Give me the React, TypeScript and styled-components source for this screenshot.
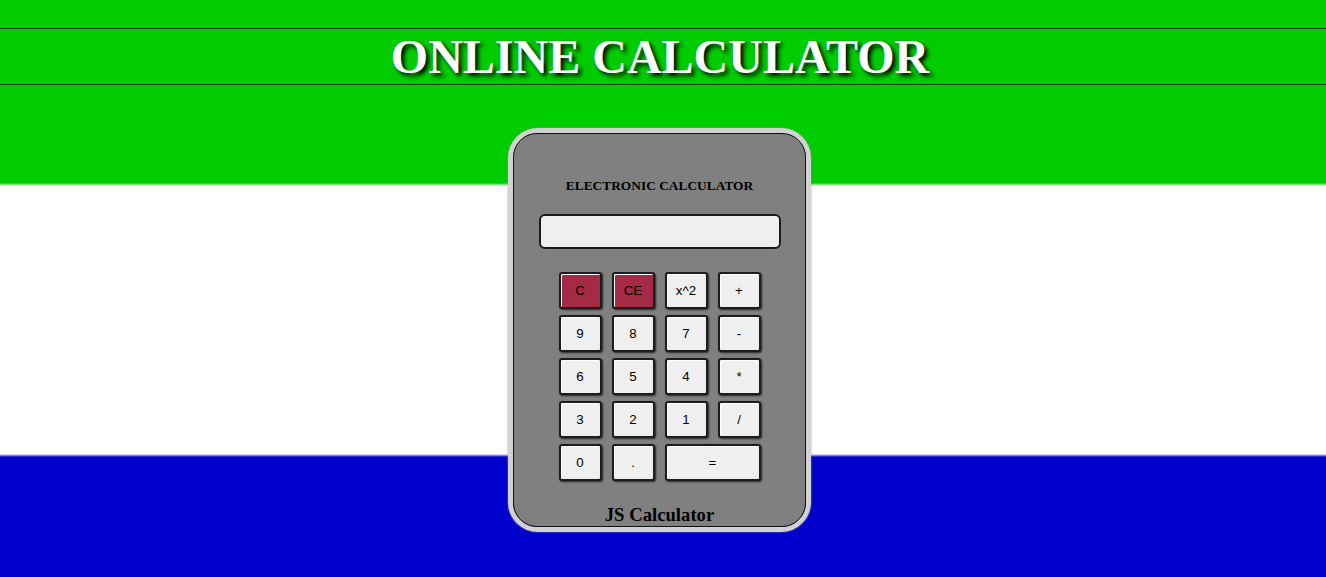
import React, { useState } from 'react'
import styled, { createGlobalStyle } from 'styled-components'

const GlobalStyle = createGlobalStyle`
  html, body {
    margin: 0;
    padding: 0;
  }
  body {
    font-family: "Liberation Serif", "Times New Roman", serif;
  }
`

const Page = styled.div`
  min-height: 577px;
  background: linear-gradient(
    to bottom,
    #00cc00 0,
    #00cc00 183px,
    #ffffff 186px,
    #ffffff 454px,
    #0000cc 457px,
    #0000cc 100%
  );
  padding-top: 28px;
  box-sizing: border-box;
  overflow: hidden;
  display: flex;
  flex-direction: column;
  align-items: center;
`

const Title = styled.h1`
  align-self: stretch;
  margin: 0;
  height: 55px;
  border-top: 1px solid #063806;
  border-bottom: 1px solid #063806;
  color: #ffffff;
  font-family: "Liberation Serif", "Times New Roman", serif;
  font-size: 48px;
  font-weight: bold;
  line-height: 55px;
  text-align: center;
  text-shadow: 3px 3px 4px #000;
  padding-right: 6px;
`

const Frame = styled.div`
  width: 293px;
  margin: 43px 7px 0 0;
  border: 5px solid #d2d2d2;
  border-radius: 30px;
  box-shadow: 0 0 2px #9a9a9a;
`

const Body = styled.div`
  height: 392px;
  border: 1px solid #111;
  border-radius: 24px;
  background: #808080;
  display: flex;
  flex-direction: column;
  align-items: center;
`

const Label = styled.div`
  margin-top: 44px;
  font-size: 13.4px;
  font-weight: bold;
  line-height: 16px;
  color: #000;
`

const Display = styled.input`
  box-sizing: border-box;
  width: 242px;
  height: 35px;
  margin-top: 20px;
  border: 2px solid #1a1a1a;
  border-radius: 6px;
  background: #efefef;
  font-family: "Liberation Sans", Arial, sans-serif;
  font-size: 16px;
  text-align: right;
  padding: 0 8px;
  outline: none;
`

const Keypad = styled.div`
  margin-top: 23px;
  display: grid;
  grid-template-columns: repeat(4, 43px);
  grid-auto-rows: 37px;
  column-gap: 10px;
  row-gap: 6px;
`

const Key = styled.button<{ $danger?: boolean; $wide?: boolean }>`
  box-sizing: border-box;
  grid-column: ${(p) => (p.$wide ? 'span 2' : 'auto')};
  border: 2px solid #1c1c1c;
  border-radius: 3px;
  background: ${(p) => (p.$danger ? '#a52a45' : '#efefef')};
  color: #000;
  font-family: "Liberation Sans", Arial, sans-serif;
  font-size: 13.3px;
  padding: 0;
  cursor: pointer;
  box-shadow: inset 1px 1px 0 #ffffff, 1px 1px 2px rgba(0, 0, 0, 0.7);
`

const Footer = styled.div`
  margin-top: 23px;
  font-size: 18.7px;
  font-weight: bold;
  line-height: 21px;
  color: #000;
`

const keys: { label: string; danger?: boolean; wide?: boolean }[] = [
  { label: 'C', danger: true },
  { label: 'CE', danger: true },
  { label: 'x^2' },
  { label: '+' },
  { label: '9' },
  { label: '8' },
  { label: '7' },
  { label: '-' },
  { label: '6' },
  { label: '5' },
  { label: '4' },
  { label: '*' },
  { label: '3' },
  { label: '2' },
  { label: '1' },
  { label: '/' },
  { label: '0' },
  { label: '.' },
  { label: '=', wide: true },
]

const App: React.FunctionComponent = () => {
  const [value, setValue] = useState('')

  const press = (label: string) => {
    if (label === 'C') return setValue('')
    if (label === 'CE') return setValue((v) => v.slice(0, -1))
    if (label === 'x^2') return setValue((v) => (v ? String(Number(v) * Number(v)) : v))
    if (label === '=') {
      try {
        // eslint-disable-next-line no-new-func
        return setValue((v) => (v ? String(Function(`return (${v})`)()) : v))
      } catch (e) {
        return setValue('Error')
      }
    }
    setValue((v) => v + label)
  }

  return (
    <Page>
      <GlobalStyle />
      <Title>ONLINE CALCULATOR</Title>
      <Frame>
        <Body>
          <Label>ELECTRONIC CALCULATOR</Label>
          <Display value={value} readOnly />
          <Keypad>
            {keys.map((k) => (
              <Key key={k.label} $danger={k.danger} $wide={k.wide} onClick={() => press(k.label)}>
                {k.label}
              </Key>
            ))}
          </Keypad>
          <Footer>JS Calculator</Footer>
        </Body>
      </Frame>
    </Page>
  )
}

export default App
